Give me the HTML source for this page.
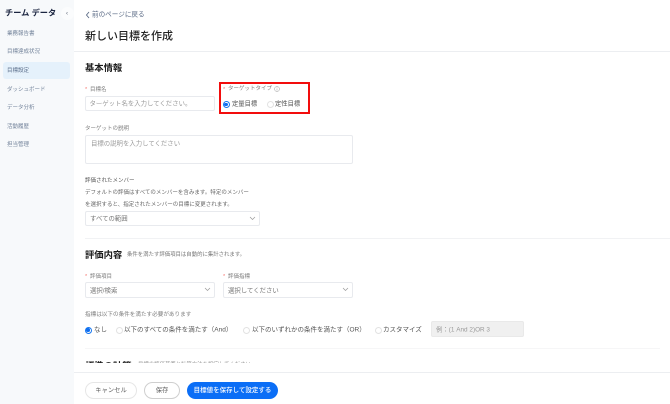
<!DOCTYPE html>
<html lang="ja">
<head>
<meta charset="utf-8">
<style>
html,body{margin:0;padding:0;width:670px;height:404px;overflow:hidden;background:#fff}
body{font-family:"Liberation Sans","Noto Sans CJK JP",sans-serif;position:relative}
#w{position:absolute;left:0;top:0;width:670px;height:404px;overflow:hidden;filter:blur(.3px)}
.t{position:absolute;white-space:nowrap;line-height:1;transform:translateY(calc(-50% + 1.8px))}
.b{position:absolute;box-sizing:border-box;background:#fff;border:1px solid #e8eaee;border-radius:2px}
.m{font-size:5.5px;color:#75859c;left:7px}
.l{font-size:5.5px;color:#7d7d7d}
.p{font-size:6.4px;color:#9a9a9a}
.s{color:#f5766f}
.v{font-size:6.5px;color:#555}
.h{font-size:9.3px;font-weight:700;color:#1c1c1c}
.r{position:absolute;box-sizing:border-box;width:7px;height:7px;border-radius:50%;border:1px solid #e2e2e2;background:#fff}
.r.on{border:1px solid #1677f0}
.r.on:after{content:"";position:absolute;left:.75px;top:.75px;width:3.5px;height:3.5px;border-radius:50%;background:#0f6ef0}
.c{position:absolute}
.btn{position:absolute;box-sizing:border-box;top:382px;height:17px;border-radius:9px;font-size:6.3px;line-height:17px;text-align:center;background:#fff;color:#5c5c5c}
</style>
</head>
<body>
<div id="w">
  <div style="position:absolute;left:0;top:0;width:74px;height:404px;background:#f7f9fb"></div>
  <div class="t" style="left:5px;top:12px;font-size:8.2px;font-weight:700;color:#1b2540">チーム データ</div>
  <div style="position:absolute;left:61px;top:7px;width:13px;height:13px;border-radius:50%;background:#fbfcfd"></div>
  <div class="t" style="left:66px;top:11.5px;font-size:6px;color:#5a6474">‹</div>
  <div style="position:absolute;left:3px;top:62px;width:67px;height:17px;border-radius:3px;background:#e5f1fb"></div>
  <div class="t m" style="top:32.5px">業務報告書</div>
  <div class="t m" style="top:51px">目標達成状況</div>
  <div class="t m" style="top:70px;color:#5c6f8c">目標設定</div>
  <div class="t m" style="top:88.5px">ダッシュボード</div>
  <div class="t m" style="top:107px">データ分析</div>
  <div class="t m" style="top:125.5px">活動履歴</div>
  <div class="t m" style="top:144px">担当管理</div>

  <svg class="c" style="left:85px;top:11px" width="6" height="8" viewBox="0 0 6 8"><path d="M4 1 1.5 4 4 7" fill="none" stroke="#5a6a85" stroke-width=".9"/></svg>
  <div class="t" style="left:92px;top:14px;font-size:6.6px;color:#5a6a85">前のページに戻る</div>
  <div class="t" style="left:85px;top:34.5px;font-size:11px;font-weight:500;color:#222">新しい目標を作成</div>
  <div style="position:absolute;left:74px;top:51px;width:596px;height:1px;background:#eceef1"></div>

  <div class="t h" style="left:85px;top:67px">基本情報</div>
  <div class="t l s" style="left:85px;top:89px">*</div>
  <div class="t l" style="left:90px;top:88.5px">目標名</div>
  <div class="b" style="left:85px;top:96px;width:130px;height:15px"></div>
  <div class="t p" style="left:89.5px;top:102.5px">ターゲット名を入力してください。</div>

  <div style="position:absolute;box-sizing:border-box;left:219px;top:82px;width:91px;height:32px;border:2px solid #f20d0d"></div>
  <div class="t l s" style="left:223px;top:88.5px">*</div>
  <div class="t l" style="left:228px;top:88px">ターゲットタイプ</div>
  <svg class="c" style="left:274px;top:86px" width="6" height="6" viewBox="0 0 6 6"><circle cx="3" cy="3" r="2.5" fill="none" stroke="#999" stroke-width=".5"/><path d="M3 2.5V4.6M3 1.4v.6" stroke="#999" stroke-width=".5"/></svg>
  <div class="r on" style="left:222.5px;top:101px"></div>
  <div class="t v" style="left:232px;top:103px;font-size:6.3px">定量目標</div>
  <div class="r" style="left:266.5px;top:101px"></div>
  <div class="t v" style="left:275px;top:103px;font-size:6.3px">定性目標</div>

  <div class="t l" style="left:85px;top:128px">ターゲットの説明</div>
  <div class="b" style="left:85px;top:135px;width:268px;height:29px"></div>
  <div class="t p" style="left:91px;top:143px">目標の説明を入力してください</div>

  <div class="t l" style="left:85px;top:180px;color:#555">評価されたメンバー</div>
  <div class="t l" style="left:85px;top:191.5px;color:#666">デフォルトの評価はすべてのメンバーを含みます。特定のメンバー</div>
  <div class="t l" style="left:85px;top:203.5px;color:#666">を選択すると、指定されたメンバーの目標に変更されます。</div>
  <div class="b" style="left:85px;top:211px;width:175px;height:15px"></div>
  <div class="t p" style="left:90px;top:218px;color:#777">すべての範囲</div>
  <svg class="c" style="left:249px;top:216px" width="7" height="5" viewBox="0 0 7 5"><path d="M1 1 3.5 3.5 6 1" fill="none" stroke="#999" stroke-width=".7"/></svg>

  <div style="position:absolute;left:85px;top:238px;width:585px;height:1px;background:#f1f2f4"></div>

  <div class="t h" style="left:85px;top:253.5px">評価内容</div>
  <div class="t" style="left:127px;top:253.5px;font-size:5.4px;color:#777">条件を満たす評価項目は自動的に集計されます。</div>

  <div class="t l s" style="left:85px;top:276px">*</div>
  <div class="t l" style="left:90px;top:275.5px">評価項目</div>
  <div class="t l s" style="left:223px;top:276px">*</div>
  <div class="t l" style="left:228px;top:275.5px">評価指標</div>
  <div class="b" style="left:85px;top:282px;width:130px;height:16px"></div>
  <div class="t p" style="left:90px;top:289.5px;color:#777">選択/検索</div>
  <svg class="c" style="left:204px;top:287px" width="7" height="5" viewBox="0 0 7 5"><path d="M1 1 3.5 3.5 6 1" fill="none" stroke="#999" stroke-width=".7"/></svg>
  <div class="b" style="left:223px;top:282px;width:130px;height:16px"></div>
  <div class="t p" style="left:228px;top:289.5px;color:#777">選択してください</div>
  <svg class="c" style="left:342px;top:287px" width="7" height="5" viewBox="0 0 7 5"><path d="M1 1 3.5 3.5 6 1" fill="none" stroke="#999" stroke-width=".7"/></svg>

  <div class="t l" style="left:85px;top:314px;font-size:5.6px">指標は以下の条件を満たす必要があります</div>
  <div class="r on" style="left:84.5px;top:326.5px"></div>
  <div class="t v" style="left:94px;top:329px">なし</div>
  <div class="r" style="left:115.5px;top:326.5px"></div>
  <div class="t v" style="left:124px;top:329px">以下のすべての条件を満たす（And）</div>
  <div class="r" style="left:243px;top:326.5px"></div>
  <div class="t v" style="left:252px;top:329px">以下のいずれかの条件を満たす（OR）</div>
  <div class="r" style="left:374.5px;top:326.5px"></div>
  <div class="t v" style="left:383px;top:329px">カスタマイズ</div>
  <div class="b" style="left:431px;top:321px;width:93px;height:16px;background:#f0f0f0;border-color:#e9e9e9"></div>
  <div class="t" style="left:436px;top:328.5px;font-size:6.4px;color:#999">例：(1 And 2)OR 3</div>

  <div style="position:absolute;left:85px;top:348px;width:575px;height:1px;background:#f6f6f7"></div>

  <div style="position:absolute;left:74px;top:355px;width:596px;height:8px;overflow:hidden">
    <div class="t h" style="left:11px;top:9.5px">標準の計算</div>
    <div class="t" style="left:64px;top:8.5px;font-size:5.4px;color:#999">目標の評価基準と計算方法を設定してください。</div>
  </div>

  <div style="position:absolute;left:74px;top:372px;width:596px;height:1px;background:#eceef1"></div>
  <div class="btn" style="left:85px;width:52px;border:1px solid #e6e6e6;line-height:16px">キャンセル</div>
  <div class="btn" style="left:144px;width:36px;border:1px solid #cfcfcf;line-height:16px">保存</div>
  <div class="btn" style="left:187px;width:91px;background:#0b6ef6;color:#fff;line-height:18px;font-weight:500;font-size:6.5px">目標値を保存して設定する</div>
</div>
</body>
</html>
